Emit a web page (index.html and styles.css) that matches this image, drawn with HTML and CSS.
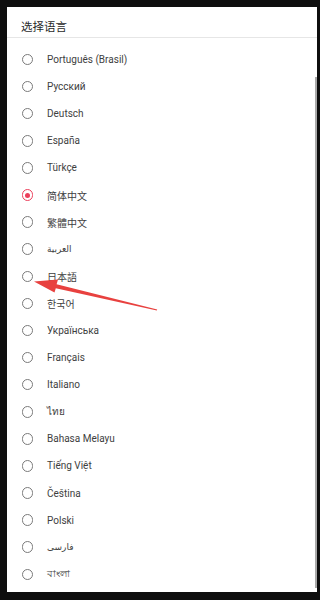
FILE: index.html
```html
<!DOCTYPE html>
<html lang="zh">
<head>
<meta charset="utf-8">
<link rel="stylesheet" href="styles.css">
</head>
<body>
<div class="dialog">
  <div class="title"><span>选择语言</span></div>
  <ul class="list">
    <li class="row"><span class="radio"></span><span class="label">Português (Brasil)</span></li>
    <li class="row"><span class="radio"></span><span class="label">Русский</span></li>
    <li class="row"><span class="radio"></span><span class="label">Deutsch</span></li>
    <li class="row"><span class="radio"></span><span class="label">España</span></li>
    <li class="row"><span class="radio"></span><span class="label">Türkçe</span></li>
    <li class="row"><span class="radio checked"></span><span class="label">简体中文</span></li>
    <li class="row"><span class="radio"></span><span class="label">繁體中文</span></li>
    <li class="row"><span class="radio"></span><span class="label small">العربية</span></li>
    <li class="row"><span class="radio"></span><span class="label">日本語</span></li>
    <li class="row"><span class="radio"></span><span class="label">한국어</span></li>
    <li class="row"><span class="radio"></span><span class="label">Українська</span></li>
    <li class="row"><span class="radio"></span><span class="label">Français</span></li>
    <li class="row"><span class="radio"></span><span class="label">Italiano</span></li>
    <li class="row"><span class="radio"></span><span class="label">ไทย</span></li>
    <li class="row"><span class="radio"></span><span class="label">Bahasa Melayu</span></li>
    <li class="row"><span class="radio"></span><span class="label">Tiếng Việt</span></li>
    <li class="row"><span class="radio"></span><span class="label">Čeština</span></li>
    <li class="row"><span class="radio"></span><span class="label">Polski</span></li>
    <li class="row"><span class="radio"></span><span class="label small">فارسی</span></li>
    <li class="row"><span class="radio"></span><span class="label">বাংলা</span></li>
  </ul>
  <div class="scroll-thumb"></div>
</div>
<svg class="arrow" width="320" height="600" viewBox="0 0 320 600">
  <polygon points="34,281.5 58,279.5 56.6,284.2 157.2,309.6 156.8,310.6 55.8,288.2 54.5,292.5" fill="#e8413f"/>
</svg>
</body>
</html>
```
FILE: styles.css
```css
html, body {
  margin: 0;
  padding: 0;
}
body {
  background: #0e0e0e;
  width: 320px;
  height: 600px;
  overflow: hidden;
  position: relative;
  font-family: Roboto, "Noto Sans", "Noto Sans CJK SC", "DejaVu Sans", sans-serif;
}
.dialog {
  position: relative;
  margin: 7px 0 0 7px;
  width: 310px;
  height: 585px;
  background: #fff;
  overflow: hidden;
}
.title {
  height: 31px;
  padding: 12px 0 0 14px;
  font-size: 11.5px;
  line-height: 14px;
  color: #2a2a2a;
  border-bottom: 1px solid #e6e6e6;
  box-sizing: border-box;
  font-family: "Noto Sans CJK SC", sans-serif;
}
.list {
  list-style: none;
  margin: 0;
  padding: 8px 0 0 0;
}
.row {
  height: 27.1px;
  display: flex;
  align-items: center;
  padding-left: 14.5px;
}
.radio {
  width: 11.5px;
  height: 11.5px;
  border: 1.4px solid #7a7a7a;
  border-radius: 50%;
  box-sizing: border-box;
  flex: none;
  display: flex;
  align-items: center;
  justify-content: center;
}
.radio.checked {
  border-color: #ec3f5b;
}
.radio.checked::after {
  content: "";
  width: 5px;
  height: 5px;
  border-radius: 50%;
  background: #ec3f5b;
}
.label {
  margin-left: 14px;
  font-size: 10px;
  color: #3e3e3e;
}
.label.small {
  font-size: 9px;
}
.scroll-thumb {
  position: absolute;
  right: 0;
  top: 70px;
  width: 2.5px;
  height: 511px;
  background: #a9a9a9;
}
.arrow {
  position: absolute;
  left: 0;
  top: 0;
  pointer-events: none;
}
```
